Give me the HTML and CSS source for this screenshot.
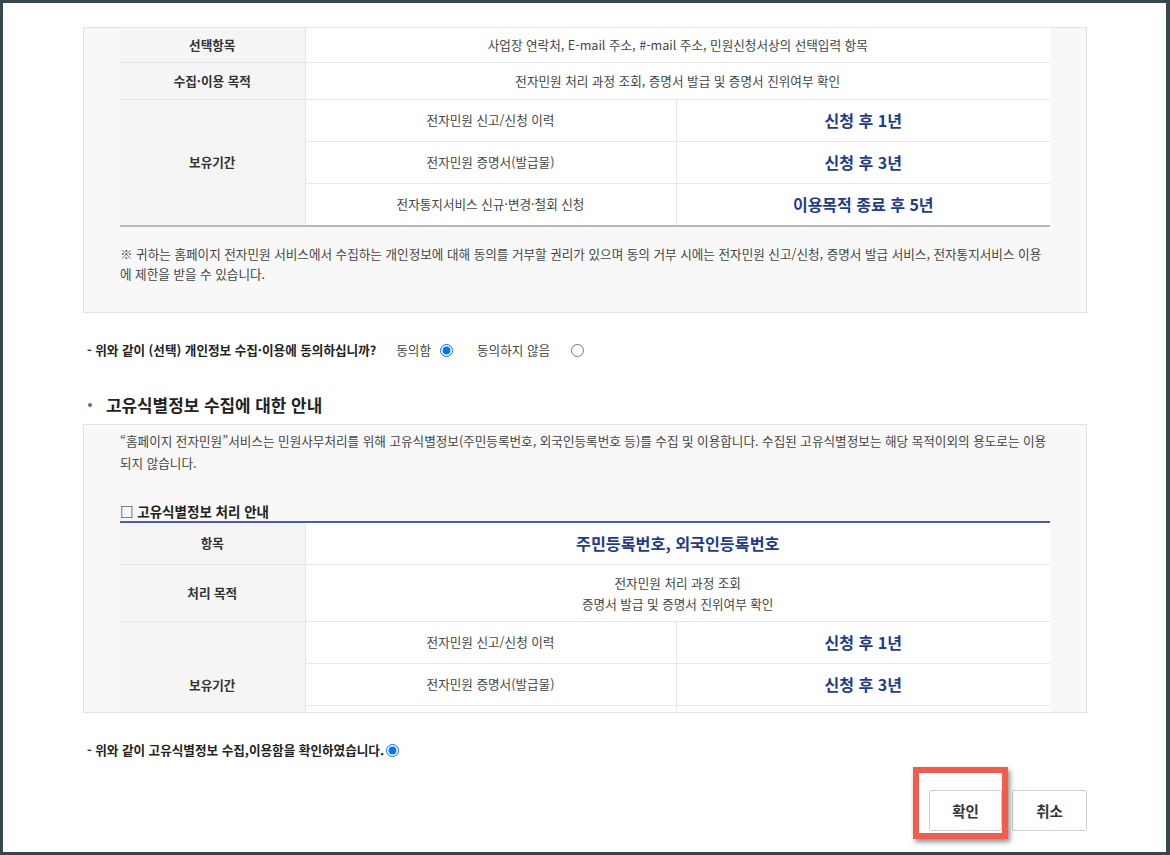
FILE: index.html
```html
<!DOCTYPE html>
<html lang="ko">
<head>
<meta charset="utf-8">
<title>개인정보 수집 동의</title>
<link rel="stylesheet" href="styles.css">
</head>
<body>
<div class="page">
  <div class="scrollbox box1">
    <table class="info">
      <colgroup><col class="c-th"><col class="c-mid"><col class="c-end"></colgroup>
      <tr class="h34"><th>선택항목</th><td colspan="2">사업장 연락처, E-mail 주소, #-mail 주소, 민원신청서상의 선택입력 항목</td></tr>
      <tr class="h37"><th>수집·이용 목적</th><td colspan="2">전자민원 처리 과정 조회, 증명서 발급 및 증명서 진위여부 확인</td></tr>
      <tr class="h42"><th rowspan="3">보유기간</th><td>전자민원 신고/신청 이력</td><td class="em">신청 후 1년</td></tr>
      <tr class="h42"><td>전자민원 증명서(발급물)</td><td class="em">신청 후 3년</td></tr>
      <tr class="h43 last"><td>전자통지서비스 신규·변경·철회 신청</td><td class="em">이용목적 종료 후 5년</td></tr>
    </table>
    <p class="note">※ 귀하는 홈페이지 전자민원 서비스에서 수집하는 개인정보에 대해 동의를 거부할 권리가 있으며 동의 거부 시에는 전자민원 신고/신청, 증명서 발급 서비스, 전자통지서비스 이용에 제한을 받을 수 있습니다.</p>
  </div>

  <div class="consent">
    <span class="q">- 위와 같이 (선택) 개인정보 수집·이용에 동의하십니까?</span>
    <label class="opt first">동의함<input type="radio" name="agree" checked></label>
    <label class="opt second">동의하지 않음<input type="radio" name="agree"></label>
  </div>

  <h3 class="sec"><span class="dot"></span>고유식별정보 수집에 대한 안내</h3>

  <div class="scrollbox box2">
    <p class="intro">“홈페이지 전자민원”서비스는 민원사무처리를 위해 고유식별정보(주민등록번호, 외국인등록번호 등)를 수집 및 이용합니다. 수집된 고유식별정보는 해당 목적이외의 용도로는 이용되지 않습니다.</p>
    <h4 class="sub">□ 고유식별정보 처리 안내</h4>
    <table class="info">
      <colgroup><col class="c-th"><col class="c-mid"><col class="c-end"></colgroup>
      <tr class="h41"><th>항목</th><td colspan="2" class="em big">주민등록번호, 외국인등록번호</td></tr>
      <tr class="h57"><th>처리 목적</th><td colspan="2" class="two">전자민원 처리 과정 조회<br>증명서 발급 및 증명서 진위여부 확인</td></tr>
      <tr class="h42"><th rowspan="3">보유기간</th><td>전자민원 신고/신청 이력</td><td class="em">신청 후 1년</td></tr>
      <tr class="h42"><td>전자민원 증명서(발급물)</td><td class="em">신청 후 3년</td></tr>
      <tr class="h43"><td>전자통지서비스 신규·변경·철회 신청</td><td class="em">이용목적 종료 후 5년</td></tr>
    </table>
  </div>

  <div class="consent">
    <span class="q">- 위와 같이 고유식별정보 수집,이용함을 확인하였습니다.</span>
    <input class="r-inline" type="radio" name="confirm" checked>
  </div>

  <div class="actions">
    <button class="btn ok" type="button">확인</button>
    <button class="btn cancel" type="button">취소</button>
  </div>

  <div class="highlight"></div>
</div>
</body>
</html>
```

FILE: styles.css
```css
html, body {
  margin: 0;
  padding: 0;
}
body {
  background: #37474f;
  font-family: "Noto Sans CJK KR", "Noto Sans", sans-serif;
  color: #444;
}
.page {
  position: relative;
  margin: 3px 4px 3px 3px;
  height: 849px;
  box-sizing: border-box;
  background: #fff;
  padding: 24px 79px 0 80px;
  overflow: hidden;
}
.scrollbox {
  box-sizing: border-box;
  border: 1px solid #e2e2e2;
  background: #f8f8f8;
  padding: 0 36px;
  overflow: hidden;
}
.box1 { height: 286px; }
.box2 { height: 289px; padding-top: 5px; }

.info {
  width: 100%;
  border-collapse: collapse;
  table-layout: fixed;
  font-size: 12.6px;
}
.c-th { width: 185px; }
.c-mid { width: 371px; }
.info th, .info td {
  border: 1px solid #e6e6e6;
  text-align: center;
  vertical-align: middle;
  padding: 0;
  line-height: 20px;
}
.info tr:first-child th, .info tr:first-child td { border-top: 0; }
.info th:first-child { border-left: 0; }
.info td:last-child { border-right: 0; }
.info th {
  background: #f5f5f5;
  color: #333;
  font-weight: 700;
}
.info td {
  background: #fff;
  color: #444;
}
.info .last td, .info .last th { border-bottom: 2px solid #b9b9b9; }
.box1 .info tr:nth-child(3) th { border-bottom: 2px solid #b9b9b9; }
.h34 { height: 34px; }
.h37 { height: 37px; }
.h41 { height: 41px; }
.h42 { height: 42px; }
.h43 { height: 43px; }
.h57 { height: 57px; }
.info td.em {
  color: #1d3c8c;
  font-weight: 700;
  font-size: 16px;
}
.info td.em.big { font-size: 16.2px; }
.info td.two { line-height: 21px; }

.note {
  margin: 17px 0 0;
  font-size: 12.6px;
  line-height: 20px;
  color: #444;
}

.consent {
  display: flex;
  align-items: center;
  margin-top: 27px;
  height: 20px;
  font-size: 12.6px;
  line-height: 20px;
  padding-left: 4px;
}
.consent .q {
  font-weight: 700;
  color: #222;
}
.opt {
  display: flex;
  align-items: center;
  color: #444;
}
.opt.first { margin-left: 20px; }
.opt.second { margin-left: 24px; }
.opt input { width: 13px; height: 13px; margin: 0; }
.opt.first input { margin-left: 9px; }
.opt.second input { margin-left: 21px; }
.r-inline { width: 13px; height: 13px; margin: 0 0 0 2px; }

.sec {
  display: flex;
  align-items: center;
  margin: 33px 0 0;
  height: 24px;
  font-size: 16.9px;
  line-height: 24px;
  font-weight: 700;
  color: #222;
}
.sec .dot {
  width: 4px;
  height: 4px;
  border-radius: 50%;
  background: #5468b8;
  margin: 0 14px 0 5px;
}
.sec + .box2 { margin-top: 7px; }

.intro {
  margin: 0;
  font-size: 12.6px;
  line-height: 22px;
  color: #444;
}
.sub {
  margin: 27px 0 0;
  font-size: 13.5px;
  line-height: 20px;
  font-weight: 700;
  color: #222;
  border-bottom: 2px solid #4b5cab;
}

.actions {
  display: flex;
  justify-content: flex-end;
  gap: 10px;
  margin-top: 30px;
}
.btn {
  height: 41px;
  box-sizing: border-box;
  border: 1px solid #cfcfcf;
  border-radius: 2px;
  background: #fff;
  font-family: inherit;
  font-size: 14.5px;
  font-weight: 700;
  color: #333;
  padding: 0;
}
.btn.ok { width: 73px; }
.btn.cancel { width: 75px; }

.highlight {
  position: absolute;
  left: 910px;
  top: 764px;
  width: 95px;
  height: 72px;
  box-sizing: border-box;
  border: 6px solid #f25c4c;
  box-shadow: 2px 3px 5px rgba(0, 0, 0, 0.45);
}
```
